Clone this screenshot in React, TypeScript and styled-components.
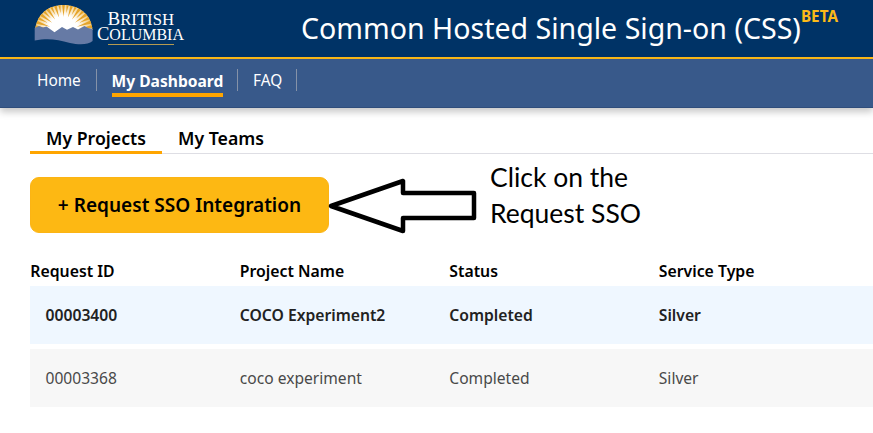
import React from 'react';
import styled, { createGlobalStyle } from 'styled-components';

const GlobalStyle = createGlobalStyle`
  *, *::before, *::after { box-sizing: border-box; }
  body {
    margin: 0;
    background: #fff;
    color: #000;
    font-family: 'Noto Sans', 'Open Sans', sans-serif;
    overflow: hidden;
  }
`;

const Page = styled.div`
  width: 873px;
  height: 433px;
  overflow: hidden;
`;

const Header = styled.header`
  display: flex;
  height: 59px;
  padding-left: 32px;
  background: #003366;
  border-bottom: 2px solid #fcba19;
`;

const Logo = styled.svg`
  width: 160px;
  height: 50px;
  flex: none;
`;

const Title = styled.h1`
  margin: 0 0 0 109px;
  display: flex;
  align-items: flex-start;
  color: #fff;
  font-size: 28.55px;
  font-weight: 400;
  line-height: 55px;
  white-space: nowrap;
`;

const Beta = styled.sup`
  color: #fcba19;
  font-size: 15.3px;
  font-weight: 700;
  line-height: 20px;
  margin: 6px 0 0;
`;

const Nav = styled.nav`
  display: flex;
  align-items: flex-start;
  height: 49px;
  padding: 10px 0 0 22px;
  background: #38598a;
  border-bottom: 1px solid #2f4d7b;
  box-shadow: 0 4px 7px rgba(0, 0, 0, 0.22);
`;

const NavItem = styled.a<{ $active?: boolean; $width: number }>`
  width: ${(p) => p.$width}px;
  height: 22px;
  padding-left: ${(p) => (p.$active ? 14.5 : 15)}px;
  border-right: 1px solid #8592a8;
  color: #fff;
  font-size: ${(p) => (p.$active ? 15.6 : 15.4)}px;
  font-weight: ${(p) => (p.$active ? 700 : 400)};
  line-height: 24px;
  white-space: nowrap;
`;

const NavLabel = styled.span<{ $active?: boolean }>`
  display: inline-block;
  height: 28px;
  border-bottom: ${(p) => (p.$active ? '4px solid #ffa500' : 'none')};
`;

const Main = styled.main`
  padding: 16px 0 0 30px;
`;

const Tabs = styled.div`
  display: flex;
  height: 30px;
  box-shadow: inset 0 -1px #dedee4;
`;

const Tab = styled.div<{ $active?: boolean }>`
  height: 30px;
  padding: 0 16px;
  border-bottom: ${(p) => (p.$active ? '3px solid #ffa500' : 'none')};
  font-size: 17.7px;
  font-weight: 600;
  line-height: 28px;
  white-space: nowrap;
`;

const ActionRow = styled.section`
  display: flex;
  align-items: flex-start;
  height: 94px;
  padding-top: 8px;
`;

const RequestButton = styled.button`
  width: 299px;
  height: 56px;
  margin-top: 15px;
  padding: 0;
  border: 1px solid #fcb414;
  border-radius: 9px;
  background: #fdb813;
  color: #000;
  font: 600 19.05px/54px 'Noto Sans', sans-serif;
  white-space: nowrap;
`;

const Arrow = styled.svg`
  width: 150px;
  height: 60px;
  margin: 14px 0 0 -1px;
  flex: none;
`;

const Note = styled.p`
  margin: -3px 0 0 12px;
  font: 400 26.5px/36px Lato, sans-serif;
  white-space: nowrap;
`;

const TableHead = styled.div`
  display: grid;
  grid-template-columns: repeat(4, 209.5px);
  height: 38px;
  font-size: 15.8px;
  font-weight: 600;
  line-height: 47px;
`;

const Row = styled.div<{ $selected?: boolean }>`
  display: grid;
  grid-template-columns: repeat(4, 209.5px);
  height: 58px;
  margin-bottom: 5px;
  background: ${(p) => (p.$selected ? '#eff7ff' : '#f7f7f7')};
  color: ${(p) => (p.$selected ? '#222' : '#494949')};
  font-size: ${(p) => (p.$selected ? 15.7 : 15.6)}px;
  font-weight: ${(p) => (p.$selected ? 600 : 400)};
  line-height: 59px;
`;

const Cell = styled.span<{ $inset?: boolean }>`
  padding-left: ${(p) => (p.$inset ? 15.5 : 0.3)}px;
  white-space: nowrap;
`;

const RAY_COUNT = 21;

// Wedges fan outwards from the sun, alternating in length.
const rays = Array.from({ length: RAY_COUNT }, (_, i) => {
  const angle = Math.PI * (i / (RAY_COUNT - 1));
  const inner = i % 2 ? 18 : 14;
  const at = (r: number, a: number) =>
    `${(63.5 - Math.cos(a) * r).toFixed(2)},${(31 - Math.sin(a) * r).toFixed(2)}`;
  return `M${at(inner, angle)}L${at(36, angle - 0.068)}L${at(36, angle + 0.068)}Z`;
}).join('');

const BCLogo = () => (
  <Logo viewBox="32 0 160 50" role="img" aria-label="British Columbia">
    <defs>
      <clipPath id="dome">
        <path d="M35 30C37 14 48 5 63.5 5S91 14 92.5 30Z" />
      </clipPath>
      <radialGradient id="glow" gradientUnits="userSpaceOnUse" cx="63.5" cy="31" r="31">
        <stop offset="0.5" stopColor="#fff" />
        <stop offset="1" stopColor="#efc062" />
      </radialGradient>
    </defs>
    <g clipPath="url(#dome)">
      <rect x="34" y="4" width="60" height="28" fill="url(#glow)" />
      <path d={rays} fill="#e5a42a" />
    </g>
    <path d="M50 28H78V33H50Z" fill="#fff" />
    <path
      d="M34.7 28L39 26L43 27.5L46.5 26.5L54.5 32.3L62 27L67 29.8L73 27L78 29.5L84.5 26L88 28L92.6 29V41C88 45 79 45 70 43C57 39 47 38 34.7 40.5Z"
      fill="#667aa5"
    />
    <g fill="#fff" fontFamily="'Liberation Serif', serif">
      <text x="107.5" y="24.9" fontSize="18" textLength="66.5" lengthAdjust="spacingAndGlyphs">
        B<tspan fontSize="15.8">RITISH</tspan>
      </text>
      <text x="97" y="39.9" fontSize="18.5" textLength="87" lengthAdjust="spacingAndGlyphs">
        C<tspan fontSize="16">OLUMBIA</tspan>
      </text>
    </g>
    <rect x="108" y="44" width="66" height="1" fill="#b59b50" />
  </Logo>
);

const requests = [
  { id: '00003400', name: 'COCO Experiment2', status: 'Completed', service: 'Silver', selected: true },
  { id: '00003368', name: 'coco experiment', status: 'Completed', service: 'Silver', selected: false },
];

export default function App() {
  return (
    <Page>
      <GlobalStyle />
      <Header>
        <BCLogo />
        <Title>
          Common Hosted Single Sign-on (CSS)<Beta>BETA</Beta>
        </Title>
      </Header>
      <Nav>
        <NavItem $width={75}><NavLabel>Home</NavLabel></NavItem>
        <NavItem $width={141} $active><NavLabel $active>My Dashboard</NavLabel></NavItem>
        <NavItem $width={59}><NavLabel>FAQ</NavLabel></NavItem>
      </Nav>
      <Main>
        <Tabs>
          <Tab $active>My Projects</Tab>
          <Tab>My Teams</Tab>
        </Tabs>
        <ActionRow>
          <RequestButton>+ Request SSO Integration</RequestButton>
          <Arrow viewBox="328 176 150 60">
            <path d="M331 206L403 181V193H474V218H403V231Z" fill="#fff" stroke="#000" strokeWidth="4.5" strokeLinejoin="round" />
          </Arrow>
          <Note>Click on the<br />Request SSO</Note>
        </ActionRow>
        <TableHead>
          <Cell>Request ID</Cell>
          <Cell>Project Name</Cell>
          <Cell>Status</Cell>
          <Cell>Service Type</Cell>
        </TableHead>
        {requests.map((r) => (
          <Row key={r.id} $selected={r.selected}>
            <Cell $inset>{r.id}</Cell>
            <Cell>{r.name}</Cell>
            <Cell>{r.status}</Cell>
            <Cell>{r.service}</Cell>
          </Row>
        ))}
      </Main>
    </Page>
  );
}
